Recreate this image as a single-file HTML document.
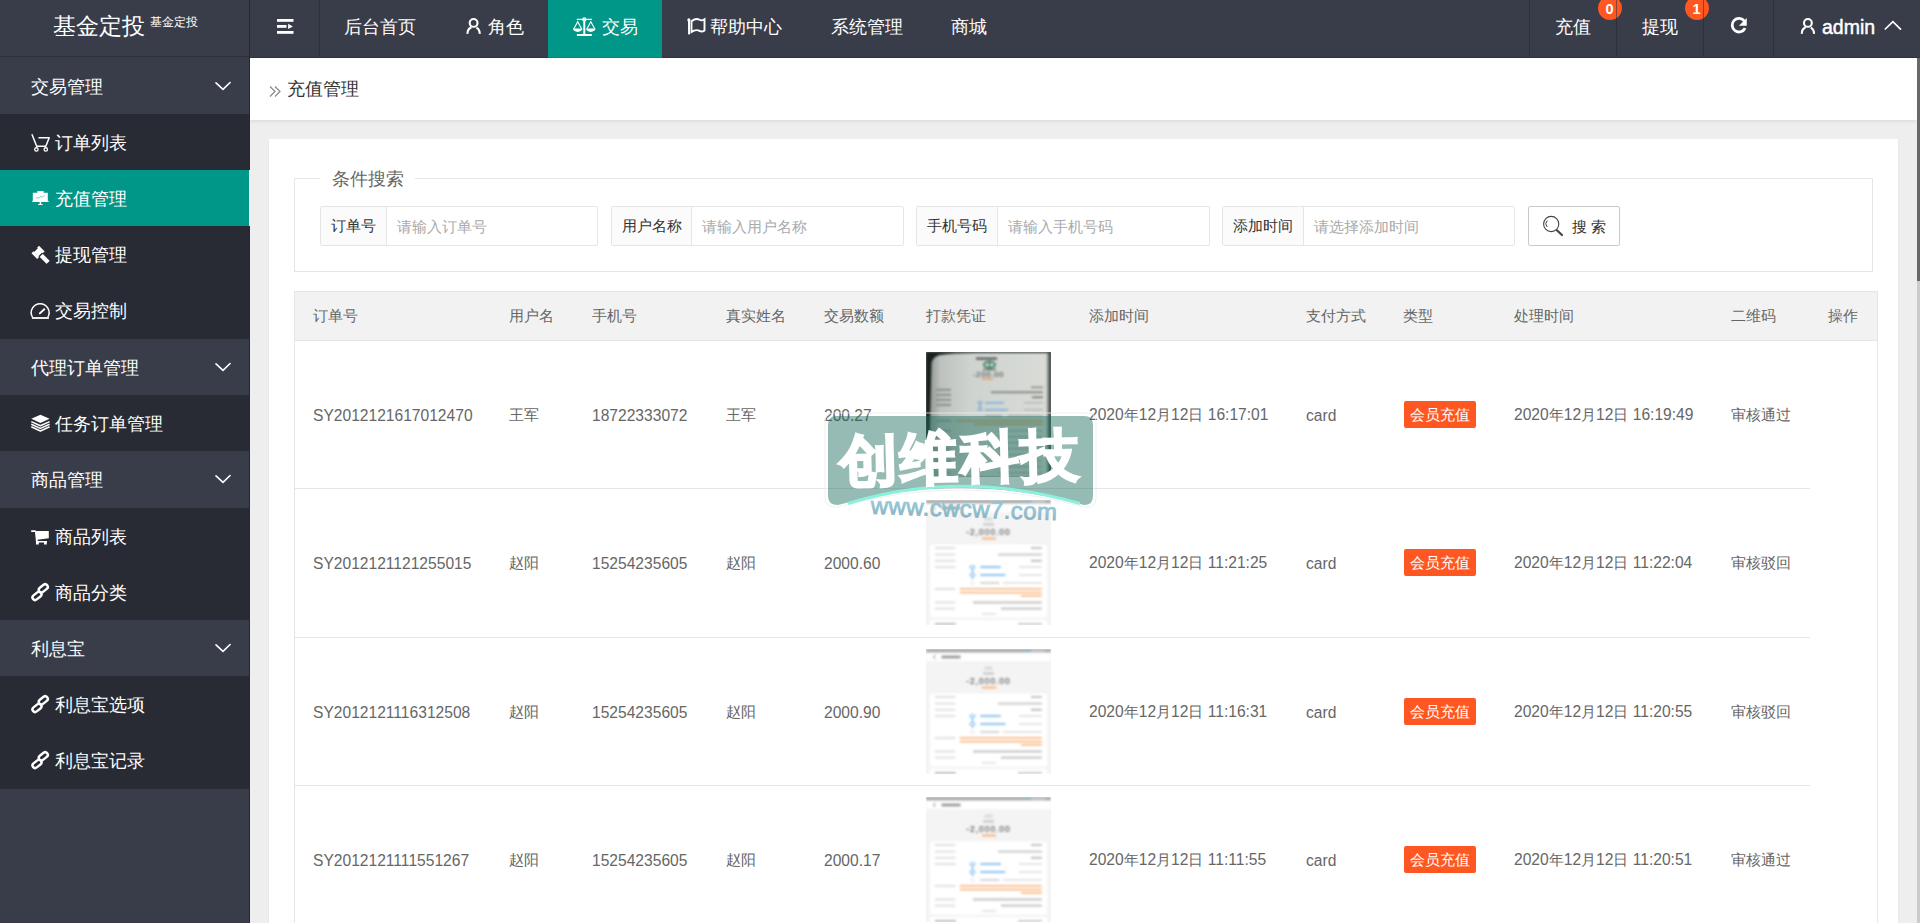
<!DOCTYPE html><html><head><meta charset="utf-8"><title>充值管理</title><style>
*{margin:0;padding:0;box-sizing:border-box}
html,body{width:1920px;height:923px;overflow:hidden;background:#eeeeee;font-family:"Liberation Sans",sans-serif;}
div,span{position:absolute}
.w{white-space:nowrap}
svg{position:absolute;overflow:visible}
</style></head><body>
<div style="left:250px;top:58px;width:1670px;height:865px;background:#eeeeee"></div>
<div style="left:250px;top:58px;width:1667px;height:62px;background:#fff;box-shadow:0 1px 4px rgba(0,0,0,.10)"></div>
<span class="w" style="left:287px;top:79px;font-size:18px;line-height:20px;color:#333;">充值管理</span>
<div style="left:269px;top:139px;width:1629px;height:800px;background:#fff;box-shadow:0 1px 2px rgba(0,0,0,.05)"></div>
<div style="left:294px;top:178px;width:1579px;height:94px;border:1px solid #e6e6e6"></div>
<div style="left:320px;top:166px;width:95px;height:26px;background:#fff"></div>
<span class="w" style="left:332px;top:169px;font-size:18px;line-height:20px;color:#666;">条件搜索</span>
<div style="left:320px;top:206px;width:278px;height:40px;border:1px solid #e6e6e6;border-radius:2px;background:#fff"></div>
<div style="left:321px;top:207px;width:66px;height:38px;background:#fbfbfb;border-right:1px solid #e6e6e6;border-radius:2px 0 0 2px"></div>
<span class="w" style="left:321px;top:217px;width:65px;text-align:center;font-size:15px;line-height:18px;color:#333">订单号</span>
<span class="w" style="left:397px;top:218px;font-size:15px;line-height:18px;color:#aaa;">请输入订单号</span>
<div style="left:611px;top:206px;width:293px;height:40px;border:1px solid #e6e6e6;border-radius:2px;background:#fff"></div>
<div style="left:612px;top:207px;width:80px;height:38px;background:#fbfbfb;border-right:1px solid #e6e6e6;border-radius:2px 0 0 2px"></div>
<span class="w" style="left:612px;top:217px;width:79px;text-align:center;font-size:15px;line-height:18px;color:#333">用户名称</span>
<span class="w" style="left:702px;top:218px;font-size:15px;line-height:18px;color:#aaa;">请输入用户名称</span>
<div style="left:916px;top:206px;width:294px;height:40px;border:1px solid #e6e6e6;border-radius:2px;background:#fff"></div>
<div style="left:917px;top:207px;width:81px;height:38px;background:#fbfbfb;border-right:1px solid #e6e6e6;border-radius:2px 0 0 2px"></div>
<span class="w" style="left:917px;top:217px;width:80px;text-align:center;font-size:15px;line-height:18px;color:#333">手机号码</span>
<span class="w" style="left:1008px;top:218px;font-size:15px;line-height:18px;color:#aaa;">请输入手机号码</span>
<div style="left:1222px;top:206px;width:293px;height:40px;border:1px solid #e6e6e6;border-radius:2px;background:#fff"></div>
<div style="left:1223px;top:207px;width:81px;height:38px;background:#fbfbfb;border-right:1px solid #e6e6e6;border-radius:2px 0 0 2px"></div>
<span class="w" style="left:1223px;top:217px;width:80px;text-align:center;font-size:15px;line-height:18px;color:#333">添加时间</span>
<span class="w" style="left:1314px;top:218px;font-size:15px;line-height:18px;color:#aaa;">请选择添加时间</span>
<div style="left:1528px;top:206px;width:92px;height:40px;border:1px solid #c9c9c9;border-radius:2px;background:#fff"></div>
<span class="w" style="left:1572px;top:218px;font-size:15px;line-height:18px;color:#333;">搜 索</span>
<div style="left:294px;top:291px;width:1584px;height:640px;border:1px solid #e6e6e6;border-bottom:none"></div>
<div style="left:295px;top:292px;width:1582px;height:49px;background:#f2f2f2;border-bottom:1px solid #e6e6e6"></div>
<span class="w" style="left:313px;top:307px;font-size:15px;line-height:18px;color:#666;">订单号</span>
<span class="w" style="left:509px;top:307px;font-size:15px;line-height:18px;color:#666;">用户名</span>
<span class="w" style="left:592px;top:307px;font-size:15px;line-height:18px;color:#666;">手机号</span>
<span class="w" style="left:726px;top:307px;font-size:15px;line-height:18px;color:#666;">真实姓名</span>
<span class="w" style="left:824px;top:307px;font-size:15px;line-height:18px;color:#666;">交易数额</span>
<span class="w" style="left:926px;top:307px;font-size:15px;line-height:18px;color:#666;">打款凭证</span>
<span class="w" style="left:1089px;top:307px;font-size:15px;line-height:18px;color:#666;">添加时间</span>
<span class="w" style="left:1306px;top:307px;font-size:15px;line-height:18px;color:#666;">支付方式</span>
<span class="w" style="left:1403px;top:307px;font-size:15px;line-height:18px;color:#666;">类型</span>
<span class="w" style="left:1514px;top:307px;font-size:15px;line-height:18px;color:#666;">处理时间</span>
<span class="w" style="left:1731px;top:307px;font-size:15px;line-height:18px;color:#666;">二维码</span>
<span class="w" style="left:1828px;top:307px;font-size:15px;line-height:18px;color:#666;">操作</span>
<span class="w" style="left:313px;top:407px;font-size:15.6px;line-height:18px;color:#666;">SY2012121617012470</span>
<span class="w" style="left:509px;top:406px;font-size:15px;line-height:18px;color:#666;">王军</span>
<span class="w" style="left:592px;top:407px;font-size:15.6px;line-height:18px;color:#666;">18722333072</span>
<span class="w" style="left:726px;top:406px;font-size:15px;line-height:18px;color:#666;">王军</span>
<span class="w" style="left:824px;top:407px;font-size:15.6px;line-height:18px;color:#666;">200.27</span>
<span class="w" style="left:1089px;top:406px;font-size:15px;line-height:18px;color:#666;"><span style="position:static;font-size:15.6px">2020</span>年<span style="position:static;font-size:15.6px">12</span>月<span style="position:static;font-size:15.6px">12</span>日<span style="position:static;font-size:15.6px"> 16:17:01</span></span>
<span class="w" style="left:1306px;top:407px;font-size:15.6px;line-height:18px;color:#666;">card</span>
<div style="left:1404px;top:401px;width:72px;height:27px;background:#FF5722;border-radius:2px"></div>
<span class="w" style="left:1410px;top:406px;font-size:15px;line-height:18px;color:#fff;">会员充值</span>
<span class="w" style="left:1514px;top:406px;font-size:15px;line-height:18px;color:#666;"><span style="position:static;font-size:15.6px">2020</span>年<span style="position:static;font-size:15.6px">12</span>月<span style="position:static;font-size:15.6px">12</span>日<span style="position:static;font-size:15.6px"> 16:19:49</span></span>
<span class="w" style="left:1731px;top:406px;font-size:15px;line-height:18px;color:#666;">审核通过</span>
<span class="w" style="left:313px;top:555px;font-size:15.6px;line-height:18px;color:#666;">SY2012121121255015</span>
<span class="w" style="left:509px;top:554px;font-size:15px;line-height:18px;color:#666;">赵阳</span>
<span class="w" style="left:592px;top:555px;font-size:15.6px;line-height:18px;color:#666;">15254235605</span>
<span class="w" style="left:726px;top:554px;font-size:15px;line-height:18px;color:#666;">赵阳</span>
<span class="w" style="left:824px;top:555px;font-size:15.6px;line-height:18px;color:#666;">2000.60</span>
<span class="w" style="left:1089px;top:554px;font-size:15px;line-height:18px;color:#666;"><span style="position:static;font-size:15.6px">2020</span>年<span style="position:static;font-size:15.6px">12</span>月<span style="position:static;font-size:15.6px">12</span>日<span style="position:static;font-size:15.6px"> 11:21:25</span></span>
<span class="w" style="left:1306px;top:555px;font-size:15.6px;line-height:18px;color:#666;">card</span>
<div style="left:1404px;top:549px;width:72px;height:27px;background:#FF5722;border-radius:2px"></div>
<span class="w" style="left:1410px;top:554px;font-size:15px;line-height:18px;color:#fff;">会员充值</span>
<span class="w" style="left:1514px;top:554px;font-size:15px;line-height:18px;color:#666;"><span style="position:static;font-size:15.6px">2020</span>年<span style="position:static;font-size:15.6px">12</span>月<span style="position:static;font-size:15.6px">12</span>日<span style="position:static;font-size:15.6px"> 11:22:04</span></span>
<span class="w" style="left:1731px;top:554px;font-size:15px;line-height:18px;color:#666;">审核驳回</span>
<div style="left:295px;top:488px;width:1515px;height:1px;background:#e6e6e6"></div>
<span class="w" style="left:313px;top:704px;font-size:15.6px;line-height:18px;color:#666;">SY2012121116312508</span>
<span class="w" style="left:509px;top:703px;font-size:15px;line-height:18px;color:#666;">赵阳</span>
<span class="w" style="left:592px;top:704px;font-size:15.6px;line-height:18px;color:#666;">15254235605</span>
<span class="w" style="left:726px;top:703px;font-size:15px;line-height:18px;color:#666;">赵阳</span>
<span class="w" style="left:824px;top:704px;font-size:15.6px;line-height:18px;color:#666;">2000.90</span>
<span class="w" style="left:1089px;top:703px;font-size:15px;line-height:18px;color:#666;"><span style="position:static;font-size:15.6px">2020</span>年<span style="position:static;font-size:15.6px">12</span>月<span style="position:static;font-size:15.6px">12</span>日<span style="position:static;font-size:15.6px"> 11:16:31</span></span>
<span class="w" style="left:1306px;top:704px;font-size:15.6px;line-height:18px;color:#666;">card</span>
<div style="left:1404px;top:698px;width:72px;height:27px;background:#FF5722;border-radius:2px"></div>
<span class="w" style="left:1410px;top:703px;font-size:15px;line-height:18px;color:#fff;">会员充值</span>
<span class="w" style="left:1514px;top:703px;font-size:15px;line-height:18px;color:#666;"><span style="position:static;font-size:15.6px">2020</span>年<span style="position:static;font-size:15.6px">12</span>月<span style="position:static;font-size:15.6px">12</span>日<span style="position:static;font-size:15.6px"> 11:20:55</span></span>
<span class="w" style="left:1731px;top:703px;font-size:15px;line-height:18px;color:#666;">审核驳回</span>
<div style="left:295px;top:637px;width:1515px;height:1px;background:#e6e6e6"></div>
<span class="w" style="left:313px;top:852px;font-size:15.6px;line-height:18px;color:#666;">SY2012121111551267</span>
<span class="w" style="left:509px;top:851px;font-size:15px;line-height:18px;color:#666;">赵阳</span>
<span class="w" style="left:592px;top:852px;font-size:15.6px;line-height:18px;color:#666;">15254235605</span>
<span class="w" style="left:726px;top:851px;font-size:15px;line-height:18px;color:#666;">赵阳</span>
<span class="w" style="left:824px;top:852px;font-size:15.6px;line-height:18px;color:#666;">2000.17</span>
<span class="w" style="left:1089px;top:851px;font-size:15px;line-height:18px;color:#666;"><span style="position:static;font-size:15.6px">2020</span>年<span style="position:static;font-size:15.6px">12</span>月<span style="position:static;font-size:15.6px">12</span>日<span style="position:static;font-size:15.6px"> 11:11:55</span></span>
<span class="w" style="left:1306px;top:852px;font-size:15.6px;line-height:18px;color:#666;">card</span>
<div style="left:1404px;top:846px;width:72px;height:27px;background:#FF5722;border-radius:2px"></div>
<span class="w" style="left:1410px;top:851px;font-size:15px;line-height:18px;color:#fff;">会员充值</span>
<span class="w" style="left:1514px;top:851px;font-size:15px;line-height:18px;color:#666;"><span style="position:static;font-size:15.6px">2020</span>年<span style="position:static;font-size:15.6px">12</span>月<span style="position:static;font-size:15.6px">12</span>日<span style="position:static;font-size:15.6px"> 11:20:51</span></span>
<span class="w" style="left:1731px;top:851px;font-size:15px;line-height:18px;color:#666;">审核通过</span>
<div style="left:295px;top:785px;width:1515px;height:1px;background:#e6e6e6"></div>
<div style="left:926px;top:352px;width:125px;height:125px;overflow:hidden;background:#7d8380"><svg style="left:0;top:0;filter:blur(.9px)" width="125" height="125" viewBox="0 0 125 125"><defs><linearGradient id="ph" x1="0" y1="0" x2="1" y2="0"><stop offset="0" stop-color="#b4b9b5"/><stop offset=".35" stop-color="#cfd3cf"/><stop offset="1" stop-color="#d9dcd7"/></linearGradient><linearGradient id="pl" x1="0" y1="0" x2="1" y2="0"><stop offset="0" stop-color="#101614"/><stop offset="1" stop-color="#101614" stop-opacity="0"/></linearGradient><linearGradient id="pr" x1="0" y1="0" x2="1" y2="0"><stop offset="0" stop-color="#1a2220" stop-opacity="0"/><stop offset="1" stop-color="#1a2220"/></linearGradient></defs><rect width="125" height="125" fill="url(#ph)"/><path d="M0 0 H125 V1 H50 Q25 1 14 3 Q6 5 5.5 12 L2.5 125 H0 Z" fill="#1b2321"/><rect x="0" y="0" width="14" height="125" fill="url(#pl)" opacity=".3"/><rect x="120" y="0" width="5" height="125" fill="url(#pr)"/><rect x="50" y="5.5" width="21" height="2.2" fill="#555"/><ellipse cx="63.5" cy="12.8" rx="5.4" ry="3.1" fill="none" stroke="#2b7a55" stroke-width="1.8"/><rect x="62.8" y="10" width="1.4" height="5.6" fill="#2b7a55"/><rect x="57" y="16.8" width="13" height="1.6" fill="#777"/><text x="62.5" y="24.6" text-anchor="middle" font-family="Liberation Sans, sans-serif" font-size="8" letter-spacing=".6" fill="#3a3f3c">-200.00</text><rect x="56" y="26" width="11" height="1.5" fill="#e89a60"/><rect x="10" y="37" width="15" height="1.6" fill="#7e8480"/><rect x="10" y="42" width="15" height="1.6" fill="#7e8480"/><rect x="10" y="47" width="15" height="1.6" fill="#7e8480"/><rect x="10" y="52" width="15" height="1.6" fill="#7e8480"/><rect x="105" y="34.5" width="12" height="1.6" fill="#8a8f8b"/><rect x="65" y="39.5" width="52" height="1.6" fill="#777d79"/><rect x="106" y="44.5" width="11" height="1.6" fill="#6f7571"/><ellipse cx="54" cy="50.5" rx="2.4" ry="1.2" fill="none" stroke="#6aa2d6" stroke-width=".9"/><rect x="53.4" y="51.5" width="1.2" height="5" fill="#6aa2d6"/><ellipse cx="54" cy="57.5" rx="2.4" ry="1.2" fill="none" stroke="#6aa2d6" stroke-width=".9"/><rect x="59" y="50" width="19" height="1.6" fill="#7eaee0"/><rect x="59" y="57" width="23" height="1.6" fill="#7eaee0"/><rect x="98" y="50" width="19" height="1.4" fill="#b3b8b4"/><rect x="98" y="57" width="19" height="1.4" fill="#b3b8b4"/><rect x="59" y="63" width="17" height="1.4" fill="#9ea39f"/><rect x="82" y="63" width="35" height="1.4" fill="#a5aaa6"/><rect x="10" y="68" width="15" height="1.4" fill="#8a8f8b"/><rect x="30" y="68" width="87" height="1.4" fill="#d79d55"/><rect x="48" y="71.5" width="69" height="1.4" fill="#d79d55"/><rect x="10" y="78" width="15" height="1.4" fill="#8f948f"/><rect x="72" y="78" width="44" height="1.4" fill="#a4a9a5"/><rect x="10" y="84" width="15" height="1.4" fill="#8f948f"/><rect x="72" y="84" width="44" height="1.4" fill="#a4a9a5"/><rect x="10" y="90" width="15" height="1.4" fill="#8f948f"/><rect x="72" y="90" width="44" height="1.4" fill="#a4a9a5"/><rect x="10" y="96" width="15" height="1.4" fill="#8f948f"/><rect x="72" y="96" width="44" height="1.4" fill="#a4a9a5"/><rect x="10" y="102" width="15" height="1.4" fill="#8f948f"/><rect x="72" y="102" width="44" height="1.4" fill="#a4a9a5"/><rect x="10" y="108" width="15" height="1.4" fill="#8f948f"/><rect x="72" y="108" width="44" height="1.4" fill="#a4a9a5"/><rect x="10" y="114" width="15" height="1.4" fill="#8f948f"/><rect x="72" y="114" width="44" height="1.4" fill="#a4a9a5"/><rect x="10" y="120" width="15" height="1.4" fill="#8f948f"/><rect x="72" y="120" width="44" height="1.4" fill="#a4a9a5"/></svg></div>
<div style="left:926px;top:500px;width:125px;height:125px;overflow:hidden;background:#f4f4f4"><svg style="left:0;top:0;filter:blur(1px)" width="125" height="125" viewBox="0 0 125 125"><rect width="125" height="125" fill="#f4f4f4"/><rect width="125" height="3.6" fill="#a9a9a9"/><rect x="100" y="1" width="4" height="1.6" fill="#6bb8e8"/><rect x="105" y="1" width="14" height="1.6" fill="#c8c8c8"/><rect y="3.6" width="125" height="8.6" fill="#fff"/><path d="M9.5 6 l-2.2 1.9 l2.2 1.9" stroke="#777" stroke-width=".9" fill="none"/><rect x="15.5" y="6.6" width="19" height="2.8" fill="#9a9a9a"/><path d="M59 19 h7" stroke="#bbb" stroke-width="1"/><ellipse cx="62.5" cy="19.5" rx="5" ry="1.8" fill="none" stroke="#ddd" stroke-width=".8"/><rect x="57" y="23.5" width="11" height="2" fill="#c4c4c4"/><text x="62.5" y="35" text-anchor="middle" font-family="Liberation Sans, sans-serif" font-size="8.4" letter-spacing="1" fill="#666" stroke="#666" stroke-width=".2">-2,000.00</text><rect x="56" y="37.5" width="14" height="2" fill="#f7b37c"/><rect x="4" y="44.5" width="117" height="73" rx="2" fill="#fff"/><rect x="8.8" y="47" width="20.5" height="2" fill="#e0e0e0"/><rect x="8.8" y="53.6" width="20.5" height="2" fill="#e0e0e0"/><rect x="8.8" y="59.8" width="20.5" height="2" fill="#e0e0e0"/><rect x="8.8" y="66" width="20.5" height="2" fill="#e0e0e0"/><rect x="8.8" y="88" width="20.5" height="2" fill="#e0e0e0"/><rect x="8.8" y="101.5" width="20.5" height="2" fill="#e0e0e0"/><rect x="8.8" y="107.6" width="20.5" height="2" fill="#e0e0e0"/><rect x="105" y="47" width="10.8" height="2" fill="#c4c4c4"/><rect x="72" y="53.6" width="44" height="2" fill="#cacaca"/><rect x="105" y="59.8" width="10.8" height="2" fill="#bdbdbd"/><ellipse cx="46.5" cy="67" rx="2.8" ry="1.4" fill="none" stroke="#6bb0ee" stroke-width=".9"/><rect x="45.9" y="68" width="1.2" height="6" fill="#6bb0ee"/><ellipse cx="46.5" cy="75" rx="2.8" ry="1.4" fill="none" stroke="#6bb0ee" stroke-width=".9"/><rect x="45.9" y="76" width="1.2" height="3" fill="#6bb0ee"/><rect x="54.3" y="66" width="20.4" height="2" fill="#8cc4f2"/><rect x="54.3" y="74" width="25" height="2" fill="#8cc4f2"/><rect x="93" y="66" width="22.8" height="1.8" fill="#e2e2e2"/><rect x="93" y="74" width="22.8" height="1.8" fill="#e2e2e2"/><circle cx="46.5" cy="83" r="1.8" fill="none" stroke="#ddd" stroke-width=".7"/><rect x="54.3" y="82" width="19" height="1.8" fill="#d0d0d0"/><rect x="77" y="82" width="38.8" height="1.8" fill="#e2e2e2"/><rect x="33.8" y="88.2" width="82" height="1.4" fill="#f9a868"/><rect x="33.8" y="91.9" width="82" height="1.4" fill="#f9a868"/><rect x="95" y="95.2" width="20.8" height="1.4" fill="#f9a868"/><rect x="47" y="101.5" width="68.8" height="2" fill="#c2c2c2"/><rect x="75" y="107.6" width="40.8" height="2" fill="#c4c4c4"/><rect x="56" y="113" width="14" height="1.6" fill="#e0e0e0"/><rect x="4" y="120" width="117" height="10" rx="2" fill="#fff"/><rect x="8.8" y="123" width="21" height="2" fill="#bdbdbd"/><rect x="92" y="123" width="24" height="2" fill="#ccc"/></svg></div>
<div style="left:926px;top:649px;width:125px;height:125px;overflow:hidden;background:#f4f4f4"><svg style="left:0;top:0;filter:blur(1px)" width="125" height="125" viewBox="0 0 125 125"><rect width="125" height="125" fill="#f4f4f4"/><rect width="125" height="3.6" fill="#a9a9a9"/><rect x="100" y="1" width="4" height="1.6" fill="#6bb8e8"/><rect x="105" y="1" width="14" height="1.6" fill="#c8c8c8"/><rect y="3.6" width="125" height="8.6" fill="#fff"/><path d="M9.5 6 l-2.2 1.9 l2.2 1.9" stroke="#777" stroke-width=".9" fill="none"/><rect x="15.5" y="6.6" width="19" height="2.8" fill="#9a9a9a"/><path d="M59 19 h7" stroke="#bbb" stroke-width="1"/><ellipse cx="62.5" cy="19.5" rx="5" ry="1.8" fill="none" stroke="#ddd" stroke-width=".8"/><rect x="57" y="23.5" width="11" height="2" fill="#c4c4c4"/><text x="62.5" y="35" text-anchor="middle" font-family="Liberation Sans, sans-serif" font-size="8.4" letter-spacing="1" fill="#666" stroke="#666" stroke-width=".2">-2,000.00</text><rect x="56" y="37.5" width="14" height="2" fill="#f7b37c"/><rect x="4" y="44.5" width="117" height="73" rx="2" fill="#fff"/><rect x="8.8" y="47" width="20.5" height="2" fill="#e0e0e0"/><rect x="8.8" y="53.6" width="20.5" height="2" fill="#e0e0e0"/><rect x="8.8" y="59.8" width="20.5" height="2" fill="#e0e0e0"/><rect x="8.8" y="66" width="20.5" height="2" fill="#e0e0e0"/><rect x="8.8" y="88" width="20.5" height="2" fill="#e0e0e0"/><rect x="8.8" y="101.5" width="20.5" height="2" fill="#e0e0e0"/><rect x="8.8" y="107.6" width="20.5" height="2" fill="#e0e0e0"/><rect x="105" y="47" width="10.8" height="2" fill="#c4c4c4"/><rect x="72" y="53.6" width="44" height="2" fill="#cacaca"/><rect x="105" y="59.8" width="10.8" height="2" fill="#bdbdbd"/><ellipse cx="46.5" cy="67" rx="2.8" ry="1.4" fill="none" stroke="#6bb0ee" stroke-width=".9"/><rect x="45.9" y="68" width="1.2" height="6" fill="#6bb0ee"/><ellipse cx="46.5" cy="75" rx="2.8" ry="1.4" fill="none" stroke="#6bb0ee" stroke-width=".9"/><rect x="45.9" y="76" width="1.2" height="3" fill="#6bb0ee"/><rect x="54.3" y="66" width="20.4" height="2" fill="#8cc4f2"/><rect x="54.3" y="74" width="25" height="2" fill="#8cc4f2"/><rect x="93" y="66" width="22.8" height="1.8" fill="#e2e2e2"/><rect x="93" y="74" width="22.8" height="1.8" fill="#e2e2e2"/><circle cx="46.5" cy="83" r="1.8" fill="none" stroke="#ddd" stroke-width=".7"/><rect x="54.3" y="82" width="19" height="1.8" fill="#d0d0d0"/><rect x="77" y="82" width="38.8" height="1.8" fill="#e2e2e2"/><rect x="33.8" y="88.2" width="82" height="1.4" fill="#f9a868"/><rect x="33.8" y="91.9" width="82" height="1.4" fill="#f9a868"/><rect x="95" y="95.2" width="20.8" height="1.4" fill="#f9a868"/><rect x="47" y="101.5" width="68.8" height="2" fill="#c2c2c2"/><rect x="75" y="107.6" width="40.8" height="2" fill="#c4c4c4"/><rect x="56" y="113" width="14" height="1.6" fill="#e0e0e0"/><rect x="4" y="120" width="117" height="10" rx="2" fill="#fff"/><rect x="8.8" y="123" width="21" height="2" fill="#bdbdbd"/><rect x="92" y="123" width="24" height="2" fill="#ccc"/></svg></div>
<div style="left:926px;top:797px;width:125px;height:125px;overflow:hidden;background:#f4f4f4"><svg style="left:0;top:0;filter:blur(1px)" width="125" height="125" viewBox="0 0 125 125"><rect width="125" height="125" fill="#f4f4f4"/><rect width="125" height="3.6" fill="#a9a9a9"/><rect x="100" y="1" width="4" height="1.6" fill="#6bb8e8"/><rect x="105" y="1" width="14" height="1.6" fill="#c8c8c8"/><rect y="3.6" width="125" height="8.6" fill="#fff"/><path d="M9.5 6 l-2.2 1.9 l2.2 1.9" stroke="#777" stroke-width=".9" fill="none"/><rect x="15.5" y="6.6" width="19" height="2.8" fill="#9a9a9a"/><path d="M59 19 h7" stroke="#bbb" stroke-width="1"/><ellipse cx="62.5" cy="19.5" rx="5" ry="1.8" fill="none" stroke="#ddd" stroke-width=".8"/><rect x="57" y="23.5" width="11" height="2" fill="#c4c4c4"/><text x="62.5" y="35" text-anchor="middle" font-family="Liberation Sans, sans-serif" font-size="8.4" letter-spacing="1" fill="#666" stroke="#666" stroke-width=".2">-2,000.00</text><rect x="56" y="37.5" width="14" height="2" fill="#f7b37c"/><rect x="4" y="44.5" width="117" height="73" rx="2" fill="#fff"/><rect x="8.8" y="47" width="20.5" height="2" fill="#e0e0e0"/><rect x="8.8" y="53.6" width="20.5" height="2" fill="#e0e0e0"/><rect x="8.8" y="59.8" width="20.5" height="2" fill="#e0e0e0"/><rect x="8.8" y="66" width="20.5" height="2" fill="#e0e0e0"/><rect x="8.8" y="88" width="20.5" height="2" fill="#e0e0e0"/><rect x="8.8" y="101.5" width="20.5" height="2" fill="#e0e0e0"/><rect x="8.8" y="107.6" width="20.5" height="2" fill="#e0e0e0"/><rect x="105" y="47" width="10.8" height="2" fill="#c4c4c4"/><rect x="72" y="53.6" width="44" height="2" fill="#cacaca"/><rect x="105" y="59.8" width="10.8" height="2" fill="#bdbdbd"/><ellipse cx="46.5" cy="67" rx="2.8" ry="1.4" fill="none" stroke="#6bb0ee" stroke-width=".9"/><rect x="45.9" y="68" width="1.2" height="6" fill="#6bb0ee"/><ellipse cx="46.5" cy="75" rx="2.8" ry="1.4" fill="none" stroke="#6bb0ee" stroke-width=".9"/><rect x="45.9" y="76" width="1.2" height="3" fill="#6bb0ee"/><rect x="54.3" y="66" width="20.4" height="2" fill="#8cc4f2"/><rect x="54.3" y="74" width="25" height="2" fill="#8cc4f2"/><rect x="93" y="66" width="22.8" height="1.8" fill="#e2e2e2"/><rect x="93" y="74" width="22.8" height="1.8" fill="#e2e2e2"/><circle cx="46.5" cy="83" r="1.8" fill="none" stroke="#ddd" stroke-width=".7"/><rect x="54.3" y="82" width="19" height="1.8" fill="#d0d0d0"/><rect x="77" y="82" width="38.8" height="1.8" fill="#e2e2e2"/><rect x="33.8" y="88.2" width="82" height="1.4" fill="#f9a868"/><rect x="33.8" y="91.9" width="82" height="1.4" fill="#f9a868"/><rect x="95" y="95.2" width="20.8" height="1.4" fill="#f9a868"/><rect x="47" y="101.5" width="68.8" height="2" fill="#c2c2c2"/><rect x="75" y="107.6" width="40.8" height="2" fill="#c4c4c4"/><rect x="56" y="113" width="14" height="1.6" fill="#e0e0e0"/><rect x="4" y="120" width="117" height="10" rx="2" fill="#fff"/><rect x="8.8" y="123" width="21" height="2" fill="#bdbdbd"/><rect x="92" y="123" width="24" height="2" fill="#ccc"/></svg></div>
<div style="left:0px;top:0px;width:1920px;height:58px;background:#393D49"></div>
<div style="left:0px;top:56px;width:249px;height:1px;background:#2e313b"></div>
<div style="left:250px;top:57px;width:1670px;height:1px;background:rgba(0,0,0,.16)"></div>
<div style="left:548px;top:0px;width:114px;height:58px;background:#009688;border-bottom:1px solid #00897c"></div>
<div style="left:319px;top:0px;width:1px;height:57px;background:#2e313b"></div>
<div style="left:1529px;top:0px;width:1px;height:57px;background:#2e313b"></div>
<div style="left:1616px;top:0px;width:1px;height:57px;background:#2e313b"></div>
<div style="left:1703px;top:0px;width:1px;height:57px;background:#2e313b"></div>
<div style="left:1773px;top:0px;width:1px;height:57px;background:#2e313b"></div>
<span class="w" style="left:53px;top:13px;font-size:22.5px;line-height:28px;color:#fff;">基金定投</span>
<span class="w" style="left:150px;top:16px;font-size:11.5px;line-height:12px;color:#fff;">基金定投</span>
<span class="w" style="left:344px;top:17px;font-size:18px;line-height:20px;color:#fff;">后台首页</span>
<span class="w" style="left:488px;top:17px;font-size:18px;line-height:20px;color:#fff;">角色</span>
<span class="w" style="left:602px;top:17px;font-size:18px;line-height:20px;color:#fff;">交易</span>
<span class="w" style="left:710px;top:17px;font-size:18px;line-height:20px;color:#fff;">帮助中心</span>
<span class="w" style="left:831px;top:17px;font-size:18px;line-height:20px;color:#fff;">系统管理</span>
<span class="w" style="left:951px;top:17px;font-size:18px;line-height:20px;color:#fff;">商城</span>
<span class="w" style="left:1555px;top:17px;font-size:18px;line-height:20px;color:#fff;">充值</span>
<span class="w" style="left:1642px;top:17px;font-size:18px;line-height:20px;color:#fff;">提现</span>
<span class="w" style="left:1822px;top:16px;font-size:19.5px;line-height:22px;color:#fff;-webkit-text-stroke:.45px #fff">admin</span>
<div style="left:1598px;top:-4px;width:24px;height:24px;background:#FF5722;border-radius:50%"></div>
<span class="w" style="left:1605.5px;top:2px;font-size:14.5px;line-height:14px;color:#fff;font-weight:bold">0</span>
<div style="left:1685px;top:-4px;width:24px;height:24px;background:#FF5722;border-radius:50%"></div>
<span class="w" style="left:1692.5px;top:2px;font-size:14.5px;line-height:14px;color:#fff;font-weight:bold">1</span>
<div style="left:1616px;top:0px;width:1px;height:20px;background:rgba(46,49,59,.55)"></div>
<div style="left:1703px;top:0px;width:1px;height:20px;background:rgba(46,49,59,.55)"></div>
<div style="left:0px;top:58px;width:249px;height:865px;background:#393D49"></div>
<div style="left:249px;top:0px;width:1px;height:170px;background:#262830"></div>
<div style="left:249px;top:226px;width:1px;height:697px;background:#262830"></div>
<div style="left:0px;top:58px;width:249px;height:56px;background:#393D49"></div>
<span class="w" style="left:31px;top:77px;font-size:18px;line-height:20px;color:#fff;">交易管理</span>
<div style="left:0px;top:114px;width:249px;height:56px;background:#282B33"></div>
<span class="w" style="left:55px;top:133px;font-size:18px;line-height:20px;color:#fff;">订单列表</span>
<div style="left:0px;top:170px;width:249px;height:56px;background:#009688"></div>
<span class="w" style="left:55px;top:189px;font-size:18px;line-height:20px;color:#fff;">充值管理</span>
<div style="left:0px;top:226px;width:249px;height:56px;background:#282B33"></div>
<span class="w" style="left:55px;top:245px;font-size:18px;line-height:20px;color:#fff;">提现管理</span>
<div style="left:0px;top:282px;width:249px;height:57px;background:#282B33"></div>
<span class="w" style="left:55px;top:301px;font-size:18px;line-height:20px;color:#fff;">交易控制</span>
<div style="left:0px;top:339px;width:249px;height:56px;background:#393D49"></div>
<span class="w" style="left:31px;top:358px;font-size:18px;line-height:20px;color:#fff;">代理订单管理</span>
<div style="left:0px;top:395px;width:249px;height:56px;background:#282B33"></div>
<span class="w" style="left:55px;top:414px;font-size:18px;line-height:20px;color:#fff;">任务订单管理</span>
<div style="left:0px;top:451px;width:249px;height:57px;background:#393D49"></div>
<span class="w" style="left:31px;top:470px;font-size:18px;line-height:20px;color:#fff;">商品管理</span>
<div style="left:0px;top:508px;width:249px;height:56px;background:#282B33"></div>
<span class="w" style="left:55px;top:527px;font-size:18px;line-height:20px;color:#fff;">商品列表</span>
<div style="left:0px;top:564px;width:249px;height:56px;background:#282B33"></div>
<span class="w" style="left:55px;top:583px;font-size:18px;line-height:20px;color:#fff;">商品分类</span>
<div style="left:0px;top:620px;width:249px;height:56px;background:#393D49"></div>
<span class="w" style="left:31px;top:639px;font-size:18px;line-height:20px;color:#fff;">利息宝</span>
<div style="left:0px;top:676px;width:249px;height:56px;background:#282B33"></div>
<span class="w" style="left:55px;top:695px;font-size:18px;line-height:20px;color:#fff;">利息宝选项</span>
<div style="left:0px;top:732px;width:249px;height:57px;background:#282B33"></div>
<span class="w" style="left:55px;top:751px;font-size:18px;line-height:20px;color:#fff;">利息宝记录</span>
<svg style="left:0;top:0" width="1920" height="923" viewBox="0 0 1920 923"><rect x="277" y="19" width="16.5" height="2.8" fill="#fff"/><rect x="277" y="25" width="9.5" height="2.8" fill="#fff"/><rect x="277" y="31" width="16.5" height="2.8" fill="#fff"/><path d="M288.1 23.7 L292.9 26.4 L288.1 28.9 Z" fill="#ffffff" /><circle cx="473.6" cy="22.9" r="3.9" fill="none" stroke="#fff" stroke-width="2.1"/><path d="M467.5 33.9 A6.3 6.8 0 0 1 471.40000000000003 27.2" fill="none" stroke="#ffffff" stroke-width="2.1" /><path d="M476.5 27.6 A6.3 6.8 0 0 1 479.70000000000005 33.9" fill="none" stroke="#ffffff" stroke-width="2.1" /><circle cx="1807.9" cy="22.9" r="3.9" fill="none" stroke="#fff" stroke-width="2.1"/><path d="M1801.8000000000002 33.9 A6.3 6.8 0 0 1 1805.7 27.2" fill="none" stroke="#ffffff" stroke-width="2.1" /><path d="M1810.8000000000002 27.6 A6.3 6.8 0 0 1 1814.0 33.9" fill="none" stroke="#ffffff" stroke-width="2.1" /><path d="M576.8 19.4 H591.8" fill="none" stroke="#ffffff" stroke-width="1.3" /><circle cx="584.35" cy="19.43" r="1.6" fill="none" stroke="#fff" stroke-width="1.1"/><path d="M584.3 20.5 V34.2" fill="none" stroke="#ffffff" stroke-width="2" /><rect x="576.9" y="34" width="14.9" height="2" fill="#fff"/><path d="M573.9 28.8 L577.7 21.7 L581.6 28.8" fill="none" stroke="#ffffff" stroke-width="1.1" /><path d="M572.9 28.4 H582.5 A4.8 3.5 0 0 1 572.9 28.4 Z" fill="#ffffff" /><path d="M587.0 28.8 L590.8 21.7 L594.7 28.8" fill="none" stroke="#ffffff" stroke-width="1.1" /><path d="M586.0 28.4 H595.6 A4.8 3.5 0 0 1 586.0 28.4 Z" fill="#ffffff" /><path d="M689.05 19.5 V34.4" fill="none" stroke="#ffffff" stroke-width="2" /><circle cx="688.9" cy="19.9" r="1.6" fill="#fff"/><path d="M691.5 21.2 Q696 17.8 699.5 19.8 Q702 21.2 704.5 19.3 V30.4 Q702 32.3 699.5 30.9 Q696 28.9 691.5 31.9 Z" fill="none" stroke="#ffffff" stroke-width="1.9" /><path d="M1744.5 21.2 A6.8 6.8 0 1 0 1745.1 28.1" fill="none" stroke="#ffffff" stroke-width="2.8" /><path d="M1738.9 25.65 L1746.75 18.07 L1746.75 25.65 Z" fill="#ffffff" /><path d="M1885.3 29 L1892.9 21.6 L1900.5 29.2" fill="none" stroke="#ffffff" stroke-width="1.7" stroke-linecap="round"/><path d="M216 82.8 L223 89.3 L230.1 82.5" fill="none" stroke="#ffffff" stroke-width="1.6" stroke-linecap="round"/><path d="M216 363.8 L223 370.3 L230.1 363.5" fill="none" stroke="#ffffff" stroke-width="1.6" stroke-linecap="round"/><path d="M216 475.8 L223 482.3 L230.1 475.5" fill="none" stroke="#ffffff" stroke-width="1.6" stroke-linecap="round"/><path d="M216 644.8 L223 651.3 L230.1 644.5" fill="none" stroke="#ffffff" stroke-width="1.6" stroke-linecap="round"/><path d="M31.9 134.2 L36.7 146.2 H45.8 L49.2 137.75 H38.5" fill="none" stroke="#ffffff" stroke-width="1.5" stroke-linejoin="round"/><circle cx="36.4" cy="149.45" r="1.7" fill="none" stroke="#fff" stroke-width="1.3"/><circle cx="45.8" cy="149.45" r="1.7" fill="none" stroke="#fff" stroke-width="1.3"/><rect x="32.8" y="192.75" width="15" height="8.8" fill="#fff"/><rect x="37.2" y="191.1" width="6.5" height="2" fill="#fff"/><rect x="32.2" y="200.9" width="16.5" height="1" fill="#fff"/><rect x="39.65" y="201.5" width="1.5" height="2.6" fill="#fff"/><rect x="38" y="204.1" width="4.7" height="0.9" fill="#fff"/><path d="M35.8 197.3 L37.4 198.2 L39.6 197.6 L40.6 196.3 L42.3 197.3 L44.5 195.4" fill="none" stroke="#6cc" stroke-width="0.9" /><g transform="translate(38.1,252.3) rotate(45)"><rect x="-4" y="-5.3" width="8" height="2.7" fill="#fff"/><rect x="-4" y="2.6" width="8" height="2.7" fill="#fff"/><rect x="-3" y="-3" width="6" height="6" fill="#fff"/><rect x="4.4" y="-2.2" width="9.8" height="4.4" rx="0.5" fill="#fff"/></g><path d="M32.4 317 A8.9 8.9 0 1 1 47.9 317" fill="none" stroke="#ffffff" stroke-width="1.5" /><rect x="31.9" y="317.1" width="17" height="1.8" fill="#fff"/><path d="M39.8 313.4 L44.3 309.2" fill="none" stroke="#ffffff" stroke-width="1.9" stroke-linecap="round"/><path d="M31.3 418.8 L40.4 414.7 L49.6 418.8 L40.4 423 Z" fill="#ffffff" /><path d="M31.3 421.6 L40.4 425.8 L49.6 421.6" fill="none" stroke="#ffffff" stroke-width="1.5" stroke-linejoin="round"/><path d="M31.3 424.2 L40.4 428.4 L49.6 424.2" fill="none" stroke="#ffffff" stroke-width="1.5" stroke-linejoin="round"/><path d="M31.3 426.8 L40.4 431.0 L49.6 426.8" fill="none" stroke="#ffffff" stroke-width="1.5" stroke-linejoin="round"/><path d="M31.2 530.2 H35.2 L36.2 531 H48.8 V538.2 L37.6 539.8 L37.8 541 H47 V542.6 H46.8 V544.6 H44 V542.6 H38.8 V544.6 H36 V542.6 L35 532 H31.2 Z" fill="#ffffff" /><g transform="translate(37.0,595.9) rotate(-38)"><rect x="-5" y="-2.6" width="10" height="5.2" rx="2.6" fill="none" stroke="#fff" stroke-width="2.4"/></g><g transform="translate(43.3,588.3) rotate(-38)"><rect x="-5" y="-2.6" width="10" height="5.2" rx="2.6" fill="none" stroke="#fff" stroke-width="2.4"/></g><g transform="translate(37.0,707.9) rotate(-38)"><rect x="-5" y="-2.6" width="10" height="5.2" rx="2.6" fill="none" stroke="#fff" stroke-width="2.4"/></g><g transform="translate(43.3,700.3) rotate(-38)"><rect x="-5" y="-2.6" width="10" height="5.2" rx="2.6" fill="none" stroke="#fff" stroke-width="2.4"/></g><g transform="translate(37.0,763.9) rotate(-38)"><rect x="-5" y="-2.6" width="10" height="5.2" rx="2.6" fill="none" stroke="#fff" stroke-width="2.4"/></g><g transform="translate(43.3,756.3) rotate(-38)"><rect x="-5" y="-2.6" width="10" height="5.2" rx="2.6" fill="none" stroke="#fff" stroke-width="2.4"/></g><circle cx="1551.2" cy="224" r="7.6" fill="none" stroke="#444" stroke-width="1.1"/><path d="M1547.2 220.5 A4.8 4.8 0 0 0 1547.2 227" fill="none" stroke="#444" stroke-width="1" /><path d="M1556.9 230.2 L1562 235" fill="none" stroke="#444" stroke-width="2.2" stroke-linecap="round"/><path d="M270 86.5 L275 91.5 L270 96.5 M275 86.5 L280 91.5 L275 96.5" fill="none" stroke="#888" stroke-width="1.2" /></svg>
<svg style="left:818px;top:405px" width="290" height="125" viewBox="0 0 290 125">
<defs><linearGradient id="wg" x1="0" y1="0" x2="0" y2="1"><stop offset="0" stop-color="#8fd0e0"/><stop offset="1" stop-color="#7fa6b8"/></linearGradient></defs>
<path d="M16 8 H269 Q278 8 278 17 V93 Q278 103 267 102 Q142 68 20 102 Q7 103 7 93 V17 Q7 8 16 8 Z" fill="none" stroke="#e8eeee" stroke-width="1" opacity=".8"/>
<path d="M18 11 H266 Q275 11 275 20 V91 Q275 100 266 100 Q142 66 20 100 Q10 100 10 91 V20 Q10 11 18 11 Z" fill="rgb(20,105,88)" fill-opacity=".45"/>
<path d="M30 98.5 Q142 64 262 98.5" fill="none" stroke="#8af2dc" stroke-width="3"/>
<g transform="translate(142 50) rotate(-1.5) scale(1.1 1.07)"><text x="0" y="21" text-anchor="middle" font-family="Liberation Sans, sans-serif" font-size="53" font-weight="900" fill="#ffffff" stroke="#ffffff" stroke-width="2" stroke-linejoin="miter" letter-spacing="1.5">创维科技</text></g>
<text x="146" y="112" text-anchor="middle" font-family="Liberation Sans, sans-serif" font-size="24" fill="url(#wg)" fill-opacity=".85" stroke="url(#wg)" stroke-width=".9" stroke-opacity=".8" letter-spacing="0.4" transform="rotate(2 146 106)">www.cwcw7.com</text>
</svg>
<div style="left:1917px;top:58px;width:3px;height:865px;background:#cbcbcb"></div>
<div style="left:1917px;top:58px;width:3px;height:223px;background:#686868"></div>
</body></html>
